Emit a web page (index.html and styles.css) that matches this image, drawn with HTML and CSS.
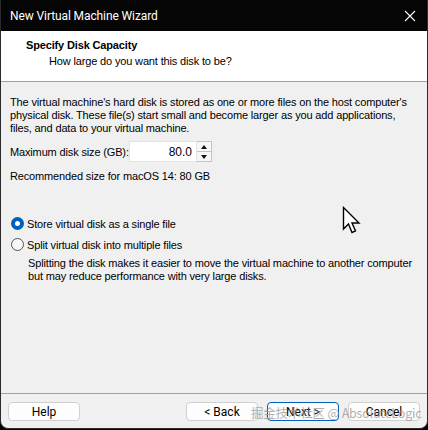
FILE: index.html
```html
<!DOCTYPE html>
<html lang="en">
<head>
    <meta charset="UTF-8">
    <title>New Virtual Machine Wizard</title>
    <link rel="stylesheet" href="styles.css">
</head>
<body>
    <div class="window">
        <div class="titlebar">
            <span class="title">New Virtual Machine Wizard</span>
            <svg class="close" width="12" height="12" viewBox="0 0 12 12">
                <path d="M1 1 L11 11 M11 1 L1 11" stroke="#fff" stroke-width="1.1"/>
            </svg>
        </div>
        <div class="header">
            <h1>Specify Disk Capacity</h1>
            <p>How large do you want this disk to be?</p>
        </div>
        <div class="content">
            <p class="intro">The virtual machine's hard disk is stored as one or more files on the host computer's physical disk. These file(s) start small and become larger as you add applications, files, and data to your virtual machine.</p>
            <div class="size-row">
                <label>Maximum disk size (GB):</label>
                <div class="spin">
                    <input type="text" value="80.0" class="spin-input">
                    <div class="spin-btns">
                        <span class="arrow up"></span>
                        <span class="arrow down"></span>
                    </div>
                </div>
            </div>
            <p class="recommend">Recommended size for macOS 14: 80 GB</p>
            <div class="options">
                <div class="radio-row">
                    <span class="radio checked"></span>
                    <span>Store virtual disk as a single file</span>
                </div>
                <div class="radio-row">
                    <span class="radio"></span>
                    <span>Split virtual disk into multiple files</span>
                </div>
                <p class="note">Splitting the disk makes it easier to move the virtual machine to another computer but may reduce performance with very large disks.</p>
            </div>
        </div>
        <div class="footer">
            <button class="btn">Help</button>
            <div class="nav">
                <button class="btn">&lt; Back</button>
                <button class="btn default">Next &gt;</button>
                <button class="btn">Cancel</button>
            </div>
        </div>
        <div class="watermark">掘金技术社区 @ AbsoluteLogic</div>
        <svg class="cursor" width="20" height="30" viewBox="0 0 20 30">
            <path d="M1.5 1.5 L1.5 23 L6.5 18 L10 26.5 L13.5 25 L10 17 L17 17 Z" fill="#fff" stroke="#000" stroke-width="1.4" stroke-linejoin="miter"/>
        </svg>
    </div>
</body>
</html>
```

FILE: styles.css
```css
* {
    margin: 0;
    padding: 0;
    box-sizing: border-box;
}
body {
    background-color: #000;
    width: 428px;
    height: 430px;
    overflow: hidden;
    font-family: 'DejaVu Sans', sans-serif;
}
.window {
    position: relative;
    width: 428px;
    height: 429px;
    background-color: #f0f0f0;
    border: 1px solid #2b2b2b;
    border-top: none;
    border-radius: 0 0 8px 8px;
    display: flex;
    flex-direction: column;
    overflow: hidden;
    font-family: 'Liberation Sans', sans-serif;
    font-size: 11px;
    letter-spacing: -0.15px;
    color: #000;
}
.titlebar {
    height: 31px;
    background-color: #050505;
    color: #fff;
    display: flex;
    align-items: center;
    justify-content: space-between;
    padding: 0 10px 0 9px;
    font-family: 'Roboto', sans-serif;
    font-size: 12px;
    letter-spacing: -0.1px;
}
.close {
    margin-right: 1px;
}
.header {
    height: 51px;
    background-color: #fff;
    border-bottom: 1px solid #a0a0a0;
    padding: 7px 0 0 25px;
}
.header h1 {
    font-size: 11px;
    font-weight: bold;
    line-height: 14px;
}
.header p {
    margin-top: 2px;
    padding-left: 23px;
    line-height: 14px;
}
.content {
    flex: 1;
    padding: 14px 10px 0 9px;
    border-bottom: 1px solid #a0a0a0;
}
.intro {
    line-height: 13px;
}
.size-row {
    display: flex;
    align-items: center;
    margin-top: 6px;
}
.size-row label {
    width: 119px;
}
.spin {
    display: flex;
    height: 21px;
}
.spin-input {
    width: 68px;
    height: 21px;
    border: 1px solid #e3e3e3;
    background-color: #fff;
    text-align: right;
    padding-right: 4px;
    font-family: 'Liberation Sans', sans-serif;
    font-size: 12px;
}
.spin-btns {
    width: 15px;
    border: 1px solid #c4c4c4;
    border-left: none;
    display: flex;
    flex-direction: column;
    background-color: #f7f7f7;
}
.arrow {
    flex: 1;
    display: flex;
    align-items: center;
    justify-content: center;
}
.arrow.up {
    border-bottom: 1px solid #c4c4c4;
}
.arrow::after {
    content: "";
    border-left: 3px solid transparent;
    border-right: 3px solid transparent;
}
.arrow.up::after {
    border-bottom: 4px solid #111;
}
.arrow.down::after {
    border-top: 4px solid #111;
}
.recommend {
    margin-top: 8px;
}
.options {
    margin-top: 31px;
}
.radio-row {
    display: flex;
    align-items: center;
    gap: 3px;
    height: 21px;
    padding-left: 1px;
}
.radio {
    width: 13px;
    height: 13px;
    border-radius: 50%;
    border: 1px solid #555;
    background-color: #f7f7f7;
}
.radio.checked {
    border: 4px solid #005fb8;
    background-color: #fff;
}
.note {
    margin: 2px 0 0 18px;
    line-height: 13px;
}
.footer {
    height: 34px;
    display: flex;
    justify-content: space-between;
    align-items: flex-start;
    padding: 8px 7px 0 7px;
}
.nav {
    display: flex;
    gap: 9px;
}
.btn {
    width: 72px;
    height: 19px;
    background-color: #fdfdfd;
    border: 1px solid #d0d0d0;
    border-radius: 4px;
    font-family: 'Roboto', sans-serif;
    font-size: 12px;
    color: #000;
}
.btn.default {
    border: 1px solid #005fb8;
    box-shadow: inset 0 0 0 1px #fdfdfd;
}
.watermark {
    position: absolute;
    left: 250px;
    top: 403px;
    font-family: 'Noto Sans CJK SC', sans-serif;
    font-size: 12.5px;
    letter-spacing: -0.2px;
    color: rgba(150, 150, 150, 0.75);
    white-space: nowrap;
}
.cursor {
    position: absolute;
    left: 341px;
    top: 206px;
}
```
